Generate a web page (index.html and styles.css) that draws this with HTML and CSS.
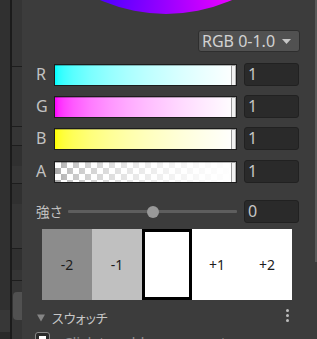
FILE: index.html
```html
<!DOCTYPE html>
<html lang="ja">
<head>
<meta charset="utf-8">
<link rel="stylesheet" href="styles.css">
</head>
<body>
<div class="app">
  <div class="side">
    <div class="side-a"><div class="sa-top"></div><div class="sa-low"></div><div class="sa-bottom"></div></div>
    <div class="side-line"></div>
    <div class="side-b">
      <div class="sb sb-1"></div>
      <div class="sb sb-2"></div>
      <div class="sb sb-3"></div>
      <div class="sb sb-dark sb-4"></div>
      <div class="sb sb-5"></div>
      <div class="sb sb-dark sb-6"></div>
      <div class="sb sb-7"></div>
      <div class="sb sb-dark sb-8"></div>
      <div class="sb sb-9"></div>
      <div class="sb-rest"><div class="sb-knob"></div></div>
    </div>
  </div>
  <div class="panel">
    <div class="wheel-area"><div class="wheel"></div></div>
    <div class="mode-row">
      <div class="dropdown"><span>RGB 0-1.0</span><svg class="caret" width="9" height="5" viewBox="0 0 9 5"><path d="M0 0H9L4.5 5Z" fill="#c6c6c6"/></svg></div>
    </div>
    <div class="channel ch-first">
      <span class="ch-label">R</span>
      <div class="bar bar-r"><span class="handle"></span></div>
      <div class="field">1</div>
    </div>
    <div class="channel">
      <span class="ch-label">G</span>
      <div class="bar bar-g"><span class="handle"></span></div>
      <div class="field">1</div>
    </div>
    <div class="channel">
      <span class="ch-label">B</span>
      <div class="bar bar-b"><span class="handle"></span></div>
      <div class="field">1</div>
    </div>
    <div class="channel ch-last">
      <span class="ch-label">A</span>
      <div class="bar bar-a"><span class="handle"></span></div>
      <div class="field">1</div>
    </div>
    <div class="strength">
      <span class="st-label">強さ</span>
      <div class="track"><span class="thumb"></span></div>
      <div class="field">0</div>
    </div>
    <div class="swatches">
      <div class="sw sw-m2">-2</div>
      <div class="sw sw-m1">-1</div>
      <div class="sw sw-cur"></div>
      <div class="sw sw-p">+1</div>
      <div class="sw sw-p">+2</div>
    </div>
    <div class="sec-head">
      <svg class="tri" width="8" height="8" viewBox="0 0 8 8"><path d="M0 0.5H8L4 7.5Z" fill="#858585"/></svg>
      <span class="sec-title">スウォッチ</span>
      <span class="kebab"><i></i><i></i><i></i></span>
    </div>
    <div class="preset">
      <span class="chk"><span class="chk-in"></span></span>
      <span class="preset-text">Click to add new preset</span>
    </div>
  </div>
  <div class="scroll"><div class="scroll-top"></div><div class="scroll-rest"></div></div>
</div>
</body>
</html>
```
FILE: styles.css
```css
* { box-sizing: border-box; }
html, body { margin: 0; padding: 0; }
body {
  width: 317px;
  height: 339px;
  overflow: hidden;
  background: #3c3c3c;
  font-family: "Noto Sans", "Noto Sans CJK JP", sans-serif;
}
.app { display: flex; width: 317px; height: 339px; overflow: hidden; }

/* left dock strip */
.side { display: flex; width: 22px; flex: none; }
.side-a { width: 10px; display: flex; flex-direction: column; background: #303030; }
.sa-top { height: 310px; }
.sa-low { height: 22px; background: #373737; }
.sa-bottom { flex: 1; background: #2a2a2a; }
.side-line { width: 2px; background: #1b1b1b; }
.side-b { width: 10px; display: flex; flex-direction: column; background: #353535; }
.sb { flex: none; border-bottom: 1px solid #1d1d1d; }
.sb-dark { border-bottom: none; background: #303030; }
.sb-1 { height: 67px; }
.sb-2 { height: 60px; }
.sb-3 { height: 19px; }
.sb-4 { height: 20px; }
.sb-5 { height: 18px; }
.sb-6 { height: 20px; }
.sb-7 { height: 45px; }
.sb-8 { height: 21px; }
.sb-9 { height: 11px; }
.sb-rest { flex: 1; padding-top: 11px; padding-left: 1px; }
.sb-knob { height: 28px; background: #515151; border-radius: 4px 0 0 4px; }

/* main panel */
.panel {
  flex: none;
  width: 293px;
  height: 339px;
  padding: 0 16px 0 15px;
  background: #3c3c3c;
  overflow: hidden;
  display: flex;
  flex-direction: column;
}
.wheel-area { flex: none; height: 30px; overflow: hidden; }
.wheel {
  width: 326px;
  height: 326px;
  margin-top: -312px;
  margin-left: -34px;
  border-radius: 50%;
  background: conic-gradient(#ffff00 0deg, #ff0000 90deg, #ff00ff 150deg, #9a00ff 180deg, #3a00ff 210deg, #00ffff 270deg, #00ff00 330deg, #ffff00 360deg);
}

.mode-row { flex: none; display: flex; justify-content: flex-end; margin-right: -1px; }
.dropdown {
  width: 102px;
  height: 22px;
  padding: 0 8px 0 3px;
  background: #515151;
  border: 1px solid #2e2e2e;
  border-radius: 3px;
  color: #d2d2d2;
  font-size: 16px;
  line-height: 20px;
  display: flex;
  align-items: center;
  justify-content: space-between;
}
.caret { display: block; }

.channel { flex: none; display: flex; align-items: center; height: 23px; margin-top: 9px; }
.ch-first { margin-top: 11px; }
.ch-last { margin-top: 10px; }
.ch-label { width: 17px; flex: none; color: #c2c2c2; font-size: 16px; line-height: 23px; margin-left: -1px; margin-right: 1px; }
.bar {
  position: relative;
  flex: none;
  width: 183px;
  height: 22px;
  margin-right: 7px;
  border: 1px solid #1c1c1c;
  box-shadow: inset 0 1px 0 rgba(0, 0, 0, 0.28);
}
.bar-r { background: linear-gradient(to right, rgb(0,255,255) 0%, rgb(40,255,255) 2%, rgb(63,255,255) 5%, rgb(89,255,255) 10%, rgb(124,255,255) 20%, rgb(149,255,255) 30%, rgb(170,255,255) 40%, rgb(188,255,255) 50%, rgb(203,255,255) 60%, rgb(218,255,255) 70%, rgb(231,255,255) 80%, rgb(243,255,255) 90%, rgb(255,255,255) 100%); }
.bar-g { background: linear-gradient(to right, rgb(255,0,255) 0%, rgb(255,40,255) 2%, rgb(255,63,255) 5%, rgb(255,89,255) 10%, rgb(255,124,255) 20%, rgb(255,149,255) 30%, rgb(255,170,255) 40%, rgb(255,188,255) 50%, rgb(255,203,255) 60%, rgb(255,218,255) 70%, rgb(255,231,255) 80%, rgb(255,243,255) 90%, rgb(255,255,255) 100%); }
.bar-b { background: linear-gradient(to right, rgb(255,255,0) 0%, rgb(255,255,40) 2%, rgb(255,255,63) 5%, rgb(255,255,89) 10%, rgb(255,255,124) 20%, rgb(255,255,149) 30%, rgb(255,255,170) 40%, rgb(255,255,188) 50%, rgb(255,255,203) 60%, rgb(255,255,218) 70%, rgb(255,255,231) 80%, rgb(255,255,243) 90%, rgb(255,255,255) 100%); }
.bar-a {
  background:
    linear-gradient(to right, rgba(255,255,255,0) 0%, rgba(255,255,255,0.25) 5%, rgba(255,255,255,0.38) 10%, rgba(255,255,255,0.52) 20%, rgba(255,255,255,0.72) 40%, rgba(255,255,255,0.84) 60%, rgba(255,255,255,0.93) 80%, rgba(255,255,255,1) 100%),
    conic-gradient(#a6a6a6 25%, #ffffff 0 50%, #a6a6a6 0 75%, #ffffff 0) 0 0 / 12px 12px;
}
.handle {
  position: absolute;
  top: 0;
  bottom: 0;
  right: 0;
  width: 5px;
  background: #f2f2f2;
  border-left: 1px solid #9a9a9a;
  border-right: 1px solid #b0b0b0;
  border-top: 1px solid #a0a0a0;
}
.field {
  flex: none;
  width: 55px;
  height: 23px;
  padding-left: 3px;
  background: #2a2a2a;
  border: 1px solid #212121;
  border-radius: 3px;
  color: #c6c6c6;
  font-size: 16px;
  line-height: 21px;
}

.strength { flex: none; display: flex; align-items: center; height: 23px; margin-top: 17px; }
.st-label { width: 31px; flex: none; color: #c2c2c2; font-family: "Noto Sans CJK JP", sans-serif; font-size: 13.5px; line-height: 23px; margin-left: -1px; margin-right: 1px; }
.track {
  position: relative;
  flex: none;
  width: 169px;
  height: 3px;
  margin-right: 7px;
  background: #5e5e5e;
  border-radius: 1px;
}
.thumb {
  position: absolute;
  left: 50%;
  top: 50%;
  width: 12px;
  height: 12px;
  margin: -6px 0 0 -6px;
  border-radius: 50%;
  background: #999999;
}

.swatches { flex: none; display: flex; width: 250px; height: 71px; margin: 6px 0 0 5px; }
.sw {
  flex: none;
  width: 50px;
  display: flex;
  align-items: center;
  justify-content: center;
  color: #1d1d1d;
  font-size: 14px;
}
.sw-m2 { background: #8c8c8c; }
.sw-m1 { background: #c0c0c0; }
.sw-cur { background: #ffffff; border: 3px solid #000000; }
.sw-p { background: #ffffff; }

.sec-head { flex: none; display: flex; align-items: center; height: 20px; margin-top: 8px; }
.tri { display: block; flex: none; margin-right: 7px; }
.sec-title {
  color: #c6c6c6;
  font-family: "Noto Sans CJK JP", sans-serif;
  font-size: 13px;
  font-feature-settings: "palt";
  line-height: 20px;
}
.kebab {
  margin-left: auto;
  margin-right: 10px;
  align-self: flex-start;
  margin-top: 1px;
  display: flex;
  flex-direction: column;
  gap: 2px;
}
.kebab i { display: block; width: 3px; height: 3px; border-radius: 50%; background: #bdbdbd; }

.preset { flex: none; display: flex; align-items: flex-start; height: 20px; margin-top: 4px; }
.chk {
  flex: none;
  width: 15px;
  height: 15px;
  margin-left: -2px;
  padding: 3px;
  border: 1px solid #8a8a8a;
  border-radius: 3px;
  background: #2b2b2b;
}
.chk-in { display: block; width: 100%; height: 100%; background: #ffffff; }
.preset-text { margin-left: 13px; margin-top: 1px; color: #8a8a8a; font-size: 15px; line-height: 18px; white-space: nowrap; }

.scroll { flex: none; width: 2px; display: flex; flex-direction: column; }
.scroll-top { height: 262px; background: #5a5a5a; }
.scroll-rest { flex: 1; background: #3c3c3c; }
```
